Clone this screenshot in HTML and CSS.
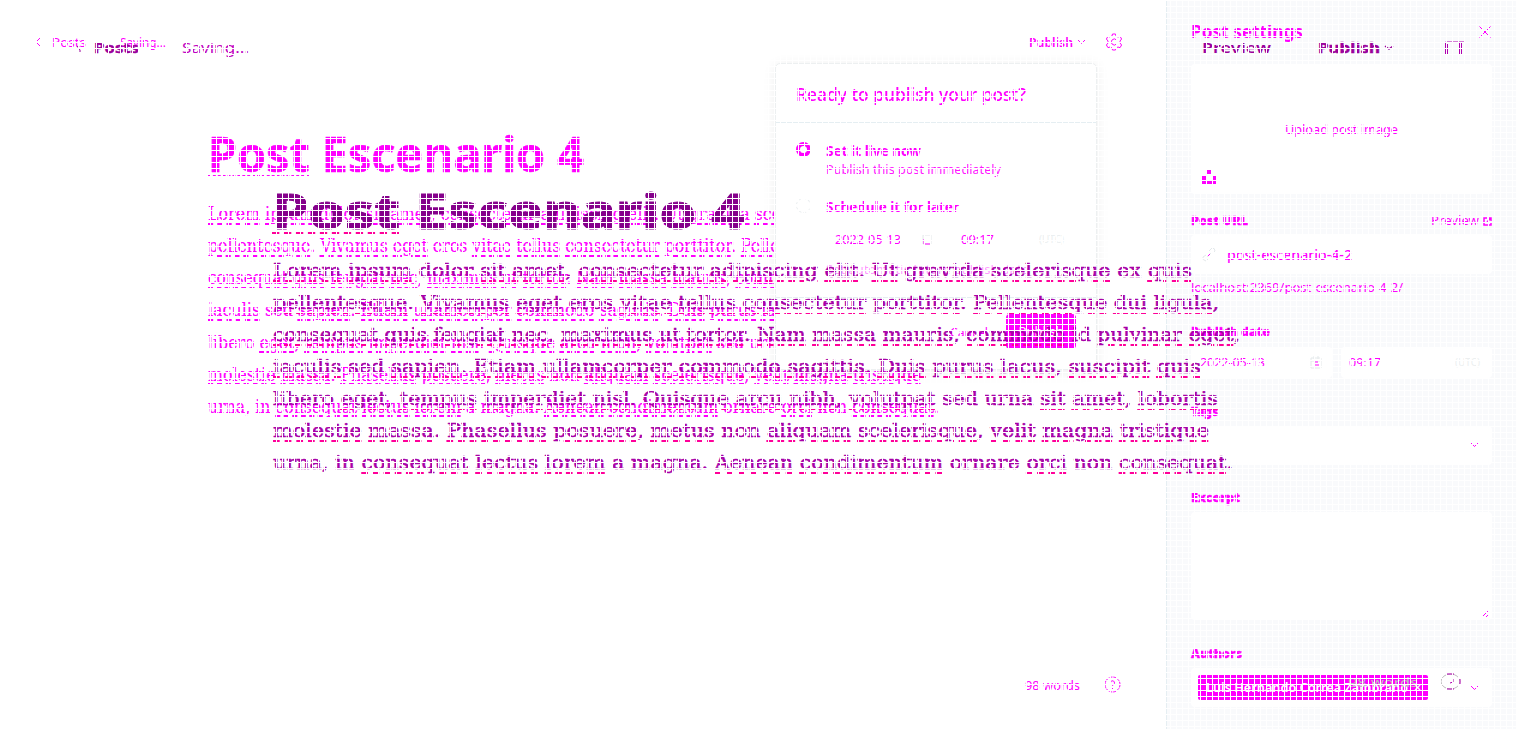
FILE: index.html
```html
<!DOCTYPE html>
<html lang="en">
<head>
<meta charset="utf-8">
<title>Post editor</title>
<link rel="stylesheet" href="styles.css">
</head>
<body>
<div class="app">
  <main class="editor">
    <header class="topbar">
      <svg class="back" width="7" height="10" viewBox="0 0 7 10"><path d="M5 1 1 5l4 4"/></svg>
      <span class="crumb" data-w="34">Posts</span>
      <span class="status" data-w="46">Saving...</span>
      <span class="publish" data-w="44">Publish</span>
      <svg class="caret" width="9" height="6" viewBox="0 0 9 6"><path d="m1 1 3.5 3.5L8 1"/></svg>
      <svg class="gear" width="18" height="18" viewBox="0 0 18 18"><path d="M7.5 1h3l.5 2 2 1 2-.7 1.6 2.7L15 8v2l1.6 2-1.6 2.7-2-.7-2 1-.5 2h-3L7 15l-2-1-2 .7L1.400 12 3 10V8L1.400 6 3 3.300 5 4l2-1z"/><path d="M11.500 7a3 3 0 1 0 0 4"/></svg>
    </header>
    <article class="post">
      <h1><span class="typo" data-w="376"><u>Post</u> Escenario 4</span></h1>
      <div class="body copy"></div>
    </article>
    <footer class="foot"><span data-w="55">98 words</span><svg width="17" height="17" viewBox="0 0 17 17"><circle cx="8.500" cy="8.500" r="7.500" stroke-dasharray="3 1"/><path d="M6.500 7a2 2 0 1 1 3 1.500q-1 .5-1 1.500M8.500 12v1"/></svg></footer>
  </main>
  <aside class="settings">
    <div class="panel-head"><h2 data-w="112">Post settings</h2><svg width="12" height="12" viewBox="0 0 12 12"><path d="m.5.5 11 11m0-11-11 11"/></svg></div>
    <div class="upload"><span data-w="113">Upload post image</span>
      <svg class="splash" width="14" height="14" viewBox="0 0 14 14"><path d="M5 0h4v4H5zM0 6h4v4h6V6h4v8H0z"/></svg></div>
    <div class="row label url"><b data-w="57">Post URL</b><span class="preview"><span data-w="48">Preview</span><svg width="9" height="9" viewBox="0 0 9 9"><path stroke-width="1.500" d="M4 1H1v7h7V5M5 1h3v3M8 1 4 5"/></svg></span></div>
    <div class="field slug"><svg width="16" height="16" viewBox="0 0 16 16"><path class="faint" d="m6 10 4-4M8 4l3-3q3 0 3 3l-3 3M8 11l-3 3q-4-1-3-4l3-2"/><path d="m7 9 2-2"/></svg><span data-w="125">post-escenario-4-2</span></div>
    <div class="hint"><span data-w="212">localhost:2369/post-escenario-4-2/</span></div>
    <div class="label date-label"><b data-w="79">Publish date</b></div>
    <div class="dates"><div class="field date"><span data-w="65">2022-05-13</span><svg width="12" height="13" viewBox="0 0 12 13"><path class="faint" d="M1 2h10v10H1zM1 5h10M4 0v3M8 0v3"/><path d="M5 6h3M5 9h4"/></svg></div>
    <div class="field time"><span data-w="32">09:17</span><span class="zone" data-w="25">(UTC)</span></div></div>
    <div class="label tags-label"><b data-w="27">Tags</b></div>
    <div class="field select"><svg width="9" height="6" viewBox="0 0 9 6"><path d="m1 1 3.500 3.500L8 1"/></svg></div>
    <div class="label excerpt-label"><b data-w="49">Excerpt</b></div>
    <div class="field area"><svg width="9" height="9" viewBox="0 0 9 9"><path d="M1 8 8 1M5 8l3-3"/></svg></div>
    <div class="label author-label"><b data-w="51">Authors</b></div>
    <div class="field authors"><div class="token"><span data-w="202">Luis Hernando Correa Zambrano</span><i>×</i></div><svg width="9" height="6" viewBox="0 0 9 6"><path d="m1 1 3.500 3.500L8 1"/></svg></div>
  </aside>
</div>
<section class="dialog">
  <header><span data-w="230">Ready to publish your post?</span></header>
  <div class="option"><i class="radio on"></i><div><b data-w="95">Set it live now</b><small data-w="175">Publish this post immediately</small></div></div>
  <div class="option later"><i class="radio"></i><div><b data-w="133">Schedule it for later</b>
    <div class="when"><div class="box"><span data-w="66">2022-05-13</span><svg width="10" height="11" viewBox="0 0 10 11"><path class="faint" d="M1 1h8v9H1z"/><path d="M2 5v5h6"/></svg></div><div class="box clock"><span data-w="33">09:17</span><span class="zone" data-w="25">(UTC)</span></div></div>
    <small class="note" data-w="203">Set automatic future publish date</small></div></div>
  <div class="actions"><span class="cancel" data-w="38">Cancel</span><span class="go">Publish</span></div>
</section>
<div class="ghost">
  <header class="ghost-bar">
    <svg class="g-back" width="6" height="8" viewBox="0 0 6 8"><path d="M1 2l3 4M4 6v2"/></svg>
    <b class="g-posts" data-w="45">Posts</b><span class="g-saving" data-w="67">Saving...</span>
    <b class="g-preview" data-w="69">Preview</b><b class="g-publish" data-w="62">Publish</b>
    <svg class="g-caret" width="10" height="6" viewBox="0 0 10 6"><path stroke-width="1.500" d="m1 1 4 3 4-3"/></svg>
    <svg class="g-layout" width="22" height="14" viewBox="0 0 22 14"><path d="M1.500 13V1h19v12M3.500 13V3M15.500 2v11M17.500 2v11"/></svg>
  </header>
  <h1><span class="typo" data-w="473"><u>Post</u> Escenario 4</span></h1>
  <div class="body wide"></div>
  <footer class="g-foot"><span data-w="70">98 words</span><svg width="21" height="17" viewBox="0 0 21 17"><ellipse cx="10.500" cy="8.500" rx="9.500" ry="7.500"/><path class="tint" d="M7 1h7M20 6v5M7 16h7M13 6v3l-3 1"/></svg></footer>
</div>
<div class="mesh"></div>
<script src="main.js"></script>
</body>
</html>
```
FILE: styles.css
```css
* { box-sizing: border-box; }
body { margin: 0; width: 1516px; height: 729px; overflow: hidden; position: relative; background: #fff; color: #f0f; font: 13px/16px "Noto Sans", "Open Sans", sans-serif; }
h1, h2 { margin: 0; }
svg { fill: none; stroke: currentColor; stroke-width: 1; flex: none; display: block; }
[data-w] { display: inline-block; white-space: nowrap; flex: none; }
.faint { stroke: #e3e8ea; }
.app { display: flex; height: 729px; }
.editor { width: 1166px; display: flex; flex-direction: column; }
.topbar { display: flex; align-items: center; height: 84px; padding-left: 35px; flex: none; }
.crumb { margin-left: 10px; }
.status { margin-left: 34px; }
.publish { margin-left: 863px; font-weight: 600; }
.caret { margin-left: 4px; }
.gear { margin-left: 19px; }
.post { padding-left: 208px; flex: 1; }
h1 { font-size: 48px; line-height: 56px; font-weight: 700; }
.post h1 { height: 114px; padding-top: 42px; -webkit-text-stroke: .6px; }
u { text-decoration: underline dashed 2px; text-underline-offset: 3px; }
.typo u { text-decoration: underline dashed 1px; text-underline-offset: 3px; }
.body { font-family: "DejaVu Serif", serif; font-size: 18.500px; line-height: 32px; }
.body div { height: 32.150px; }
.copy { -webkit-text-stroke: .2px; }
.foot { display: flex; align-items: center; gap: 24px; padding-left: 1025px; height: 88px; padding-bottom: 1px; }
.settings { width: 350px; border-left: 1px solid #e5eef2; background: #f9fafc; padding: 0 24px; }
.panel-head { display: flex; align-items: center; justify-content: space-between; height: 64px; padding: 0 1px 1px 0; }
h2 { font-size: 17px; line-height: 24px; font-weight: 700; }
.upload { height: 130px; width: 301px; background: #fff; border-radius: 4px; padding-top: 57px; display: flex; flex-direction: column; align-items: center; }
.splash { align-self: flex-start; margin: 33px 0 0 11px; fill: currentColor; stroke: none; }
.row { display: flex; justify-content: space-between; }
.label { font-size: 12.500px; line-height: 16px; font-weight: 700; -webkit-text-stroke: .3px; }
.url { margin-top: 19px; }
.preview { font-weight: 400; display: flex; gap: 4px; align-items: center; -webkit-text-stroke: 0; }
.field { background: #fff; border-radius: 4px; width: 301px; display: flex; align-items: center; }
.slug { height: 39px; margin-top: 6px; padding-left: 10px; gap: 10px; font-size: 14px; font-weight: 500; }
.hint { margin-top: 5px; height: 18px; }
.date-label { margin-top: 27px; }
.dates { display: flex; gap: 9px; margin-top: 7px; }
.date { width: 141px; height: 31px; padding: 0 10px 1px 9px; justify-content: space-between; }
.time { width: 151px; height: 31px; padding: 0 12px 1px 8px; justify-content: space-between; }
.zone { color: #eceff0; font-size: 11px; }
.tags-label { margin-top: 26px; }
.select { height: 39px; margin-top: 6px; justify-content: flex-end; padding: 0 13px 2px 0; }
.excerpt-label { margin-top: 25px; }
.area { height: 108px; margin-top: 6px; align-items: flex-end; justify-content: flex-end; padding: 0 2px 2px 0; }
.author-label { margin-top: 26px; }
.authors { height: 39px; margin-top: 6px; padding: 0 13px 0 7px; justify-content: space-between; }
.token { width: 230px; height: 25px; background: #f0f; color: #fff; border-radius: 2px; display: flex; align-items: center; gap: 6px; padding-left: 8px; font-size: 12.500px; font-weight: 600; }
.token i { font-style: normal; }
.dialog { position: absolute; left: 775px; top: 63px; width: 322px; height: 307px; background: #fff; border-radius: 5px; border: 1px solid #edf0f1; box-shadow: 0 2px 14px #00000012; }
.dialog header { height: 59px; padding: 17px 20px; border-bottom: 1px solid #e5eef2; font-size: 18px; line-height: 26px; font-weight: 500; }
.option { display: flex; gap: 15px; padding: 19px 0 0 20px; height: 56px; }
.option > div { display: flex; flex-direction: column; align-items: flex-start; }
.option b { font-size: 13.500px; line-height: 18px; font-weight: 700; }
small { font-size: 12px; line-height: 20px; opacity: .9; }
.radio { width: 15px; height: 15px; border: 1px dashed #e8ecee; border-radius: 50%; }
.radio.on { border: 4px solid #f0f; }
.later { height: 118px; padding-top: 19px; }
.when { display: flex; gap: 11px; padding-top: 8px; }
.box { width: 115px; height: 30px; display: flex; align-items: center; justify-content: space-between; padding: 0 9px 0 9px; border-radius: 3px; }
.clock { width: 124px; padding: 0 12px 0 9px; }
.note { margin-top: 6px; opacity: .4; }
.actions { display: flex; align-items: center; justify-content: flex-end; gap: 18px; border-top: 1px solid #e5eef2; height: 68px; padding: 0 20px 0 0; }
.go { width: 70px; height: 35px; border-radius: 4px; background: #f0f; color: #fff; text-align: center; line-height: 35px; }
.ghost { position: absolute; inset: 0; color: #9b009b; }
.ghost-bar { display: flex; align-items: center; height: 96px; padding-left: 76px; font-size: 14px; }
.g-posts { margin-left: 12px; -webkit-text-stroke: .4px; }
.g-saving { margin-left: 43px; color: #c000c0; }
.g-preview { margin-left: 953px; font-weight: 600; }
.g-publish { margin-left: 47px; -webkit-text-stroke: .4px; }
.g-caret { margin-left: 4px; }
.g-layout { margin-left: 50px; color: #b000b0; }
.ghost h1 { padding: 87px 0 0 272px; height: 159px; color: #85008b; -webkit-text-stroke: 1.200px; }
.wide { padding-left: 273px; color: #a800a8; -webkit-text-stroke: .5px; }
.wide div { height: 32px; }
.ghost u { text-decoration-color: #f09; }
.ghost h1 u { text-decoration-thickness: 2px; }
.g-foot { display: flex; align-items: center; gap: 22px; padding: 194px 0 0 1348px; color: #c0c0c0; }
.tint { stroke: #b000b0; }
.mesh { position: absolute; inset: 0; background: repeating-linear-gradient(90deg, #fff 0 1px, transparent 1px 6px), repeating-linear-gradient(#fff 0 1px, transparent 1px 6px); }
```
FILE: main.js
```js
// Each line: text, its width in the narrow copy, its width in the wide copy.
// Words in square brackets carry a spelling underline.
const lines = [
  ["[Lorem] [ipsum] dolor [sit] [amet], [consectetur] [adipiscing] [elit]. [Ut] [gravida] [scelerisque] ex [quis]", 700, 919],
  ["[pellentesque]. [Vivamus] [eget] eros [vitae] [tellus] [consectetur] [porttitor]. [Pellentesque] [dui] [ligula],", 720, 946],
  ["[consequat] [quis] [feugiat] [nec], [maximus] [ut] [tortor]. [Nam] [massa] [mauris], [commodo] id [pulvinar] [eget],", 736, 967],
  ["[iaculis] sed [sapien]. [Etiam] [ullamcorper] [commodo] [sagittis]. [Duis] [purus] [lacus], [suscipit] [quis]", 706, 928],
  ["libero [eget], [tempus] [imperdiet] [nisl]. [Quisque] [arcu] [nibh], [volutpat] sed urna [sit] [amet], [lobortis]", 719, 945],
  ["[molestie] [massa]. [Phasellus] [posuere], [metus] non [aliquam] [scelerisque], [velit] [magna] [tristique]", 713, 936],
  ["urna, in [consequat] [lectus] [lorem] a magna. [Aenean] [condimentum] ornare [orci] non [consequat].", 731, 960]
];
document.querySelectorAll(".body").forEach(body => {
  const column = body.classList.contains("wide") ? 2 : 1;
  body.innerHTML = lines.map(l =>
    `<div><span data-w="${l[column]}">${l[0].replace(/\[(.*?)\]/g, "<u>$1</u>")}</span></div>`).join("");
});
// Scale every run of text to its set width, keeping the flow around it.
document.querySelectorAll("[data-w]").forEach(el => {
  const natural = el.getBoundingClientRect().width;
  const wanted = Number(el.dataset.w);
  el.style.transformOrigin = "left center";
  el.style.transform = `scaleX(${wanted / natural})`;
  el.style.marginRight = `${wanted - natural}px`;
});
```
